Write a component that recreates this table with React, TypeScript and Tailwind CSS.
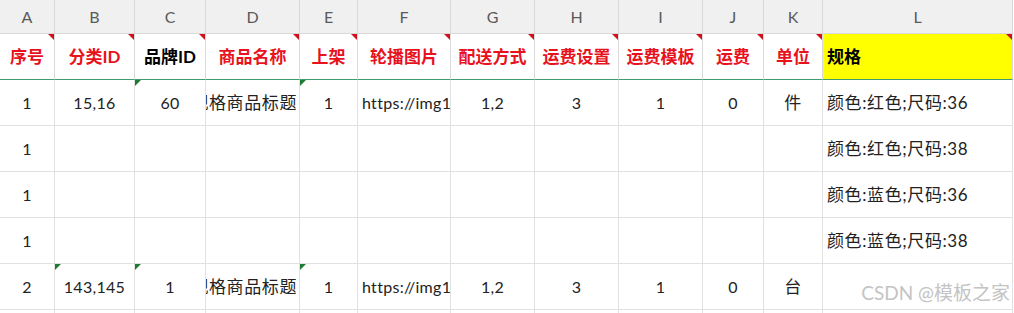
import React from 'react';

type Cell = {
  text?: string;
  align?: 'center' | 'left' | 'clipEnd';
  mark?: boolean; // green triangle in the top-left corner
  cjk?: boolean;
};

const letters = ['A', 'B', 'C', 'D', 'E', 'F', 'G', 'H', 'I', 'J', 'K', 'L'];

const headers = [
  { text: '序号', red: true },
  { text: '分类ID', red: true },
  { text: '品牌ID', red: false },
  { text: '商品名称', red: true },
  { text: '上架', red: true },
  { text: '轮播图片', red: true },
  { text: '配送方式', red: true },
  { text: '运费设置', red: true },
  { text: '运费模板', red: true },
  { text: '运费', red: true },
  { text: '单位', red: true },
  { text: '规格', red: false, yellow: true },
];

const blank = (first: string, spec: string): Cell[] => [
  { text: first },
  {}, {}, {}, {}, {}, {}, {}, {}, {}, {},
  { text: spec, align: 'left', cjk: true },
];

const rows: Cell[][] = [
  [
    { text: '1' },
    { text: '15,16' },
    { text: '60', mark: true },
    { text: '多规格商品标题', align: 'clipEnd', cjk: true },
    { text: '1', mark: true },
    { text: 'https://img1.jpg', align: 'left' },
    { text: '1,2' },
    { text: '3' },
    { text: '1' },
    { text: '0' },
    { text: '件', cjk: true },
    { text: '颜色:红色;尺码:36', align: 'left', cjk: true },
  ],
  blank('1', '颜色:红色;尺码:38'),
  blank('1', '颜色:蓝色;尺码:36'),
  blank('1', '颜色:蓝色;尺码:38'),
  [
    { text: '2' },
    { text: '143,145', mark: true },
    { text: '1', mark: true },
    { text: '多规格商品标题', align: 'clipEnd', cjk: true },
    { text: '1', mark: true },
    { text: 'https://img1.jpg', align: 'left' },
    { text: '1,2' },
    { text: '3' },
    { text: '1' },
    { text: '0' },
    { text: '台', cjk: true },
    { text: '', align: 'left' },
  ],
  Array.from({ length: 12 }, () => ({})),
];

const font = { fontFamily: 'Lato, "Noto Sans CJK SC", sans-serif' };

const App = () => {
  return (
    <div className="relative w-[1014px] h-[313px] overflow-hidden bg-white" style={font}>
      <div className="grid grid-cols-[55px_80px_71px_94px_58px_93px_84px_84px_84px_61px_59px_190px]">
        {/* Column letters */}
        {letters.map((l) => (
          <div
            key={l}
            className="h-[34px] flex items-center justify-center bg-[#f0f0f0] border-r border-b border-[#d8d8d8] text-[16px] text-[#5a5a5a]"
          >
            {l}
          </div>
        ))}

        {/* Header row */}
        {headers.map((h) => (
          <div
            key={h.text}
            className={`relative h-[46px] flex items-center border-r border-[#dadada] border-b border-b-[#3f9b74] font-bold text-[17px] ${
              h.yellow ? 'bg-[#ffff00] justify-start pl-[4px]' : 'justify-center'
            } ${h.red ? 'text-[#e8121c]' : 'text-black'}`}
          >
            {h.text}
            <span className="absolute right-0 top-0 w-[6px] h-[6px] bg-[#d0101a] [clip-path:polygon(0_0,100%_0,100%_100%)]" />
          </div>
        ))}

        {/* Data rows */}
        {rows.map((row, r) =>
          row.map((c, i) => (
            <div
              key={`${r}-${i}`}
              className={`relative h-[46px] flex items-center overflow-hidden whitespace-nowrap border-r border-b border-[#e1e1e1] text-[#222] ${
                c.cjk ? 'text-[17px] tracking-[0.6px]' : 'text-[16px] tracking-[0.3px]'
              } ${
                c.align === 'left'
                  ? 'justify-start pl-[4px]'
                  : c.align === 'clipEnd'
                  ? 'justify-end pr-[2px]'
                  : 'justify-center'
              }`}
            >
              <span className="shrink-0">{c.text}</span>
              {c.mark && (
                <span className="absolute left-0 top-0 w-[6px] h-[6px] bg-[#1e7b34] [clip-path:polygon(0_0,100%_0,0_100%)]" />
              )}
            </div>
          ))
        )}
      </div>

      {/* Watermark */}
      <div className="absolute right-[4px] top-[279px] text-[19px] text-[#c4c4c4] pointer-events-none">
        CSDN @模板之家
      </div>
    </div>
  );
};

export default App;
